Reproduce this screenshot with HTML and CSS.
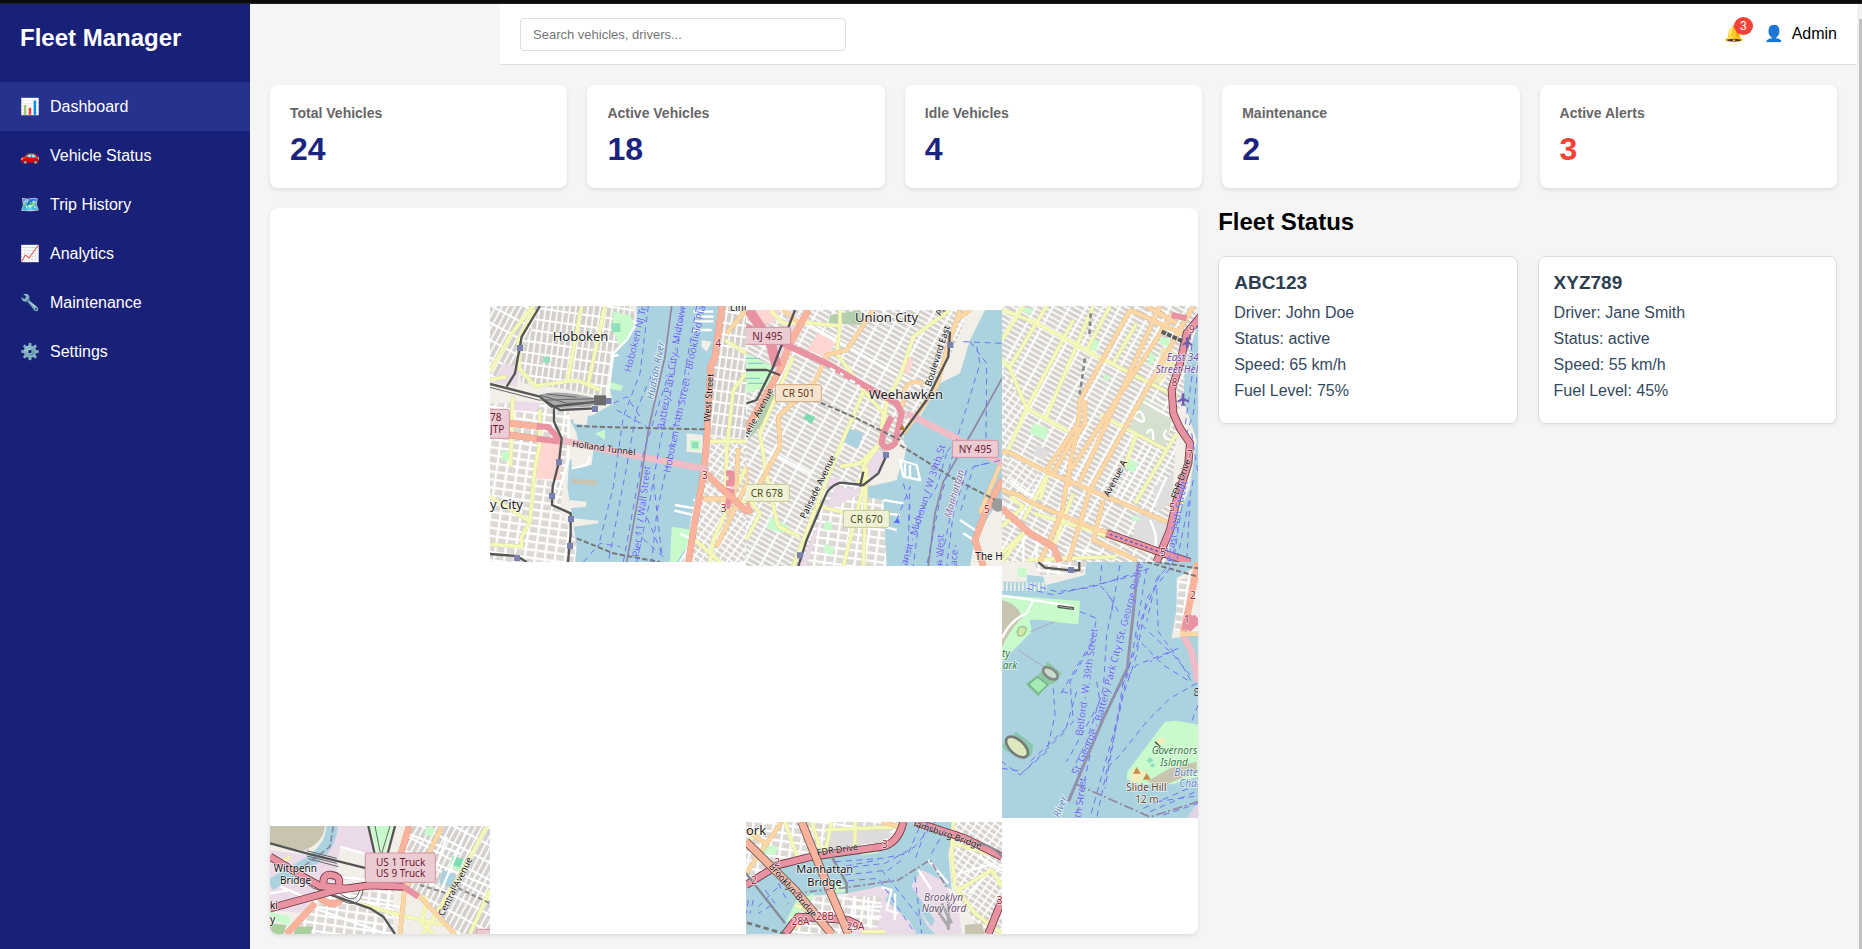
FILE: index.html
```html
<!DOCTYPE html>
<html lang="en">
<head>
<meta charset="utf-8">
<title>Fleet Manager</title>
<link rel="stylesheet" href="styles.css">
</head>
<body>
<div class="frame-edge"></div>
<div class="app">
  <aside class="sidebar">
    <h2 class="brand">Fleet Manager</h2>
    <nav class="nav">
      <a class="nav-item active" href="#"><span class="icon">📊</span>Dashboard</a>
      <a class="nav-item" href="#"><span class="icon">🚗</span>Vehicle Status</a>
      <a class="nav-item" href="#"><span class="icon">🗺️</span>Trip History</a>
      <a class="nav-item" href="#"><span class="icon">📈</span>Analytics</a>
      <a class="nav-item" href="#"><span class="icon">🔧</span>Maintenance</a>
      <a class="nav-item" href="#"><span class="icon">⚙️</span>Settings</a>
    </nav>
  </aside>

  <main class="main">
    <header class="header">
      <input class="search" type="text" placeholder="Search vehicles, drivers..." aria-label="Search vehicles, drivers">
      <div class="user-area">
        <button class="bell" type="button" aria-label="Notifications">🔔<span class="badge">3</span></button>
        <div class="user"><span class="icon">👤</span><span>Admin</span></div>
      </div>
    </header>

    <div class="content">
      <section class="stats">
        <article class="stat"><h3>Total Vehicles</h3><div class="value">24</div></article>
        <article class="stat"><h3>Active Vehicles</h3><div class="value">18</div></article>
        <article class="stat"><h3>Idle Vehicles</h3><div class="value">4</div></article>
        <article class="stat"><h3>Maintenance</h3><div class="value">2</div></article>
        <article class="stat"><h3>Active Alerts</h3><div class="value alert">3</div></article>
      </section>

      <div class="lower">
        <section class="map">
          <!-- Hoboken -->
          <svg class="tile tile-hoboken" viewBox="30 18 768 768">
            <defs>
              <pattern id="gridN" width="18" height="34" patternUnits="userSpaceOnUse" patternTransform="rotate(8)"><rect width="18" height="34" fill="#fff"/><rect x="3" y="3" width="13" height="28" fill="#d3cfca"/></pattern>
              <pattern id="gridNE" width="17" height="46" patternUnits="userSpaceOnUse" patternTransform="rotate(28)"><rect width="17" height="46" fill="#fff"/><rect x="2" y="3" width="12" height="40" fill="#d3d0cd"/></pattern>
              <pattern id="gridW" width="44" height="15" patternUnits="userSpaceOnUse" patternTransform="rotate(29)"><rect width="44" height="15" fill="#fff"/><rect x="2" y="3" width="38" height="10" fill="#d5d2ce"/></pattern>
              <pattern id="gridB" width="30" height="24" patternUnits="userSpaceOnUse" patternTransform="rotate(8)"><rect width="30" height="24" fill="#fff"/><rect x="4" y="4" width="23" height="17" fill="#dcd8d4"/></pattern>
              <pattern id="gridS" width="22" height="16" patternUnits="userSpaceOnUse" patternTransform="rotate(35)"><rect width="22" height="16" fill="#fff"/><rect x="3" y="3" width="17" height="11" fill="#d6d2cc"/></pattern>
            </defs>
            <rect class="land" x="30" y="18" width="768" height="768"/>
            <path fill="url(#gridNE)" d="M30 18H185L85 245L30 230Z"/>
            <path fill="url(#gridN)" d="M180 18H455L470 70L400 160L378 290L240 265L125 250L115 190Z"/>
            <path fill="url(#gridB)" d="M30 310H270L262 420L240 640L290 720L285 786H30Z"/>
            <path class="pink" d="M185 420L245 430L240 540L165 535Z"/>
            <path class="lilac" d="M70 190L120 205L110 260L40 248ZM90 300L180 310L170 335L95 330Z"/>
            <path class="water" d="M470 18H720L690 200L678 500L640 620L610 786H285L290 740L275 640L262 560L268 480L300 470L290 400L270 360L340 345L400 310L385 250L400 160L470 70Z"/>
            <path class="land" d="M280 335L325 340L320 375L280 370ZM275 440L340 450L335 495L275 500ZM270 600L320 605L318 620L270 625ZM280 655L355 662L355 670L280 680ZM620 400L668 405L668 460L620 455ZM665 120L695 125L680 155L665 140Z"/>
            <path fill="#c9c4b0" d="M275 535L352 542L350 556L275 550Z"/>
            <path class="park" d="M400 35L450 45L466 80L420 140L398 90ZM383 243L430 258L422 272L384 266ZM630 420L660 420L660 450L630 450ZM575 680L640 690L620 740L590 786H570ZM65 455L92 455L92 482L65 482ZM345 400L375 390V420Z"/>
            <path fill="#8fe0bb" d="M395 70h26v26h-26zM635 425h20v20h-20zM190 170h20v18h-20z"/>
            <path class="street" d="M415 165L390 170M640 35H700M645 50H700M642 64H700M640 90H695M585 615L645 625M583 632L640 645M640 600H700M600 700L640 720L600 786M265 345V480L225 615M470 70L440 120L400 160L383 290M275 505L320 495L330 470"/>
            <path fill="url(#gridN)" d="M722 18H798V420L690 405L690 200Z"/>
            <path fill="url(#gridS)" d="M685 410L798 420V786H632L650 650Z"/>
            <path class="yellow" d="M160 18L95 100L30 215M165 30L115 120L118 205L165 258L290 240L360 270M305 18L262 245M375 18L325 250M30 240L80 230M98 290L92 500M180 330L178 440L165 500L150 665L125 710V740L30 733M30 590L150 665M735 120L798 160M798 220L760 270L740 450L735 640M690 424H798M670 595L798 605M798 500L700 720L690 786M645 720L720 786"/>
            <path class="orange" d="M740 100L798 30M775 445L768 560L740 640M670 597H760M800 550L710 740"/>
            <path class="motorway" d="M725 570L755 575L740 625M738 520H755V550H738"/>
            <path class="trunk" d="M90 370L180 380M90 405L170 416M726 18L705 170L692 200L680 420L672 515L640 690L626 786M672 515L720 560L800 635"/>
            <path class="motorway" d="M170 378L205 382L245 425L170 416"/>
            <path class="tunnel" d="M240 420L440 462L680 508"/>
            <path class="rail-wide" d="M180 285Q230 265 370 300L330 320L220 325Z"/>
            <path class="rail" d="M180 18L125 110L105 220L80 260M30 252L180 290L215 320L380 302M190 300L240 330L345 325M222 325V365L245 415L237 485L218 560L216 615L272 640V700L264 786M30 762L110 768L140 786"/>
            <path class="rail-thin" d="M30 262L175 300L210 300L345 296M180 285L260 310L345 308M200 282L290 292"/>
            <path class="railtun" d="M290 378L480 384L680 388M290 715L400 760L540 786"/>
            <path class="boundary" d="M575 18L555 170L505 390L475 590L440 786"/>
            <path class="ferry" d="M505 18L480 220L430 350L400 560L355 740M525 200L470 330L440 500L385 786M560 240L490 460L430 786M610 18L580 240L540 430L510 600L470 786M650 18L600 300L560 500L530 640L515 786M400 310L440 290L480 350M410 330L500 380M545 760L500 650M550 770L470 700M545 760L520 540M310 786L360 730L420 740"/>
            <path class="station" d="M111 135h18v18h-18zM377 294h18v18h-18zM336 318h18v18h-18zM228 478h18v18h-18zM207 579h18v18h-18zM264 648h18v18h-18zM261 729h18v18h-18zM102 765h18v18h-18z"/>
            <rect x="342" y="286" width="36" height="30" fill="#6b6b6b"/>
            <text class="place" x="218" y="123">Hoboken</text>
            <text class="place" x="30" y="628">y City</text>
            <text class="place-s" x="750" y="34">Linc</text>
            <text class="ferry-t" transform="translate(452 218) rotate(-76)">Hoboken NJ Tra</text>
            <text class="water-t" transform="translate(520 300) rotate(-79)">Hudson River</text>
            <text class="ferry-t" transform="translate(552 390) rotate(-80)">Battery Park City - Midtown</text>
            <text class="ferry-t" transform="translate(570 520) rotate(-78)">Hoboken 14th Street - Brookfield Pla</text>
            <text class="ferry-t" transform="translate(478 772) rotate(-83)">Pier 11 / Wall Street</text>
            <text class="road-t" transform="translate(690 366) rotate(-86)">West Street</text>
            <text class="road-t" transform="translate(275 440) rotate(8)">Holland Tunnel</text>
            <text class="exit" x="706" y="140">4</text><text class="exit" x="666" y="538">3</text><text class="exit" x="722" y="636">3</text>
            <rect class="shield-m" x="10" y="328" width="78" height="87" rx="6"/>
            <text class="shield-mt" x="30" y="363">78</text><text class="shield-mt" x="30" y="398">JTP</text>
          </svg>

          <!-- Weehawken -->
          <svg class="tile tile-weehawken" viewBox="18 30 768 768">
            <rect class="land" x="18" y="30" width="768" height="768"/>
            <path fill="url(#gridW)" d="M18 30H690L620 190L500 420L350 540L220 798H18Z"/>
            <path fill="url(#gridB)" d="M250 540L430 560L440 798H200Z"/>
            <path class="lilac" d="M150 30L200 60L120 230L90 200ZM240 540L300 530L180 798H200L250 640L380 570L270 560ZM400 450L440 460L400 540L360 510Z"/>
            <path fill="#b5cfae" d="M270 45L360 30L365 75L265 70ZM90 270L110 290L60 380L25 420Z"/>
            <path class="park" d="M18 160L100 200L85 260L18 280ZM535 380L560 385L555 415L525 412ZM90 650L150 680L130 700L80 685ZM255 665H275V690H250ZM255 730L285 745L275 765L250 755Z"/>
            <path d="M18 175H60M25 190H70M18 235H60M25 250H70" stroke="#7dbdd6" stroke-width="3"/>
            <path fill="#7edcb0" d="M200 340L225 350L215 372L190 355Z"/>
            <path class="pink" d="M235 100L285 130L260 170L200 150ZM50 30H120L100 70H60ZM500 165L520 180L505 225L490 210ZM450 480L470 500L455 530L425 520Z"/>
            <path class="water" d="M735 30H786V590L745 650L700 740L690 798H440L430 600L375 590L385 560L470 540L495 450L490 400L540 350L600 250L660 220L690 120ZM325 385L370 400L355 445L308 425Z"/>
            <path class="land" d="M470 420L500 435L490 490L455 545L420 550L440 470ZM600 190L630 215L620 240L595 235Z"/>
            <path class="street" d="M480 480L530 495L540 540L490 530ZM495 490V530M510 495V535M430 600L490 610M430 640L480 645M430 680L470 690M660 660L720 700M670 700L710 725M130 30L480 230L540 260M60 440L210 520"/>
            <path class="yellow" d="M90 30L130 70L200 68L300 78V30M300 78L290 160L370 270L430 340L420 430L370 500V560L310 798M630 30L520 110L480 230L440 300L430 400M370 275L300 440L240 590L160 798M160 170L60 400L75 500L95 600L115 680L180 710M235 618L320 640M350 540L380 560M380 500L370 798M20 590L60 640L18 720M300 500L360 490L420 430"/>
            <path class="orange" d="M400 30L320 150L260 165L225 245M225 245L115 350L120 440L55 560L18 600M660 30L620 150L590 260L490 400M130 30L180 70M550 250Q490 230 490 300L480 340M18 500L18 600M786 480L720 640M650 60L690 30"/>
            <path class="trunk" d="M205 30L150 130L120 210L18 390M786 540L735 640L705 720L730 798M18 610L30 640"/>
            <path class="tunnel" d="M500 340L640 410L786 490"/>
            <path class="motorway-w" d="M25 30L90 120L110 200"/>
            <path class="motorway-w2" d="M18 80L140 135L260 190L370 255L470 310L485 340L465 430Q440 455 425 430L430 400L455 350"/>
            <path class="street" d="M270 205L285 213M300 220L310 226M330 240L345 248M350 255L360 260"/>
            <path class="railtun" d="M200 290L350 355L480 420M480 435L640 535L786 610"/>
            <path class="rail" d="M18 210H80L120 225M630 95L625 170L560 300L480 410M165 30L100 200L50 300L20 310M440 465L415 520L370 555L300 548Q265 560 255 590L200 720L175 798M370 515L360 560"/>
            <path class="boundary" d="M786 235L700 390L610 545L585 640L565 798"/>
            <path class="ferry" d="M690 125L740 190L738 430M670 125L786 130M710 140L720 190L650 420L600 480M620 460L590 560L540 640L520 798M640 460L600 600L560 798M680 510L640 640L620 798M650 560L600 798M700 500L786 480M470 660L510 560L505 680M740 490L700 500L660 640M490 550L510 620L500 798"/>
            <circle cx="775" cy="615" r="20" fill="#9b9b9b"/>
            <path class="station" d="M622 126h18v18h-18zM429 456h18v18h-18zM171 757h18v18h-18z"/>
            <path fill="#5b6bff" d="M460 668l14-14 6 16z"/><path fill="#b07b3d" d="M478 390l8-18 10 18z"/>
            <text class="place" x="345" y="66">Union City</text>
            <text class="place" x="386" y="296">Weehawken</text>
            <text class="place-s" x="706" y="780">The H</text>
            <text class="road-t" transform="translate(600 50) rotate(-48)">Pa</text>
            <text class="road-t" transform="translate(572 260) rotate(-72)">Boulevard East</text>
            <text class="road-t" transform="translate(196 658) rotate(-64)">Palisade Avenue</text>
            <text class="road-t" transform="translate(24 415) rotate(-62)">nelle Avenue</text>
            <text class="water-t boundary-t" transform="translate(632 655) rotate(-74)">Manhattan</text>
            <text class="ferry-t" transform="translate(500 798) rotate(-72)">ansit - Midtown / W 39th St</text>
            <text class="ferry-t" transform="translate(608 798) rotate(-88)">n West</text>
            <text class="ferry-t" transform="translate(650 798) rotate(-86)">ace -</text>
            <text class="exit" x="732" y="640">5</text>
            <rect class="shield-m" x="-8" y="82" width="160" height="51" rx="6"/><text class="shield-mt" x="37" y="119">NJ 495</text>
            <rect class="shield-m" x="637" y="421" width="138" height="51" rx="6"/><text class="shield-mt" x="656" y="458">NY 495</text>
            <rect class="shield-o" x="106" y="254" width="138" height="51" rx="6"/><text class="shield-ot" x="127" y="290">CR 501</text>
            <rect class="shield-y" x="-2" y="553" width="150" height="51" rx="6"/><text class="shield-yt" x="32" y="590">CR 678</text>
            <rect class="shield-y" x="310" y="631" width="138" height="51" rx="6"/><text class="shield-yt" x="331" y="668">CR 670</text>
          </svg>

          <!-- Lower Manhattan -->
          <svg class="tile tile-manhattan" viewBox="36 18 768 768">
            <rect class="land" x="36" y="18" width="768" height="768"/>
            <path fill="url(#gridW)" d="M36 18H620L560 400L530 786H36Z"/>
            <path fill="url(#gridS)" d="M36 200L110 330L50 460L36 470ZM60 470L150 510L110 600L36 560Z"/>
            <path fill="#dfdddd" d="M440 640L540 660L520 740L430 720ZM140 435L180 455L160 480L130 465ZM490 560L550 520V600L500 640Z"/>
            <path class="water" d="M624 70L585 200L580 300L620 420L600 560L545 700L530 786H804V18H640Z"/>
            <path class="park" d="M130 370L175 385L165 420L118 400ZM305 115L328 125L318 155L300 145ZM415 475L445 490L430 520L405 505ZM510 110L540 115L535 140L508 130ZM560 570L580 590L570 630L550 660ZM430 645L450 655L445 665L425 660ZM345 222L362 232L355 242L340 234ZM100 22L130 28L125 42L98 36ZM480 150L495 170L485 195L475 190Z"/>
            <path fill="#d5e0ce" d="M455 290L550 350L525 440L420 385Z"/>
            <path fill="#efe8b9" d="M515 140L560 160L550 200L510 250L490 245Z"/>
            <path class="street" d="M460 305L540 350M485 435L390 600M530 530L480 640M430 350q20-30 30 0t-30 0M470 400q20-30 20 20M500 290q20 30 40 10M530 390q-20 20 10 30M480 660q30 60 10 90M60 540L140 600M36 610L100 640M220 740L330 760M100 690V786M140 690V786"/>
            <path class="yellow" d="M36 30L130 65L230 118L300 158L560 290M100 18L36 120M170 18L60 200M250 60L110 325M310 18L165 360M360 18L290 150M440 70L370 190M36 180L60 205L110 325L235 395M110 325L50 460M330 345L530 450M440 400L405 500M560 400L435 610M170 530L100 660M60 590L100 620L36 680M130 640L300 690L440 740L500 760M250 580L190 740L200 786M180 500L150 600M36 786L100 700L36 760M110 780L380 770"/>
            <path class="orange" d="M420 30L270 300L265 370L165 515M285 300V370L240 430L190 520M510 18L270 545M550 40L235 520L215 640L150 786M610 18L300 570L235 786M420 30L530 80L600 110M470 18L560 70M36 455L60 458L170 515L350 590L530 665M265 380L240 490L235 560M60 575L130 610L310 685L370 700M340 600L310 720L440 780M36 570L100 590"/>
            <path class="trunk" d="M36 625L120 700L190 740L210 786"/>
            <path class="casing-m" d="M640 40L590 100L570 190L545 270L550 340L570 385L600 430L595 490L560 600L540 690L500 786"/>
            <path class="motorway-w2" d="M640 40L590 100L570 190L545 270L550 340L570 385L600 430L595 490L560 600L540 690L500 786"/>
            <path class="motorway" d="M545 45L590 55"/>
            <path class="casing-m" d="M350 700L520 760L600 786"/><path class="motorway-w2" d="M350 700L520 760L600 786"/>
            <path d="M360 703L520 760" stroke="#445ab5" stroke-width="4" stroke-dasharray="8 8"/>
            <path d="M302 40L298 110M285 175L268 290" stroke="#888" stroke-width="8" stroke-dasharray="14 10"/>
            <path d="M515 95L580 125" stroke="#5b5b5b" stroke-width="12" stroke-dasharray="14 4"/>
            <path class="ferry" d="M624 80L600 100L610 200L585 380M605 400L624 520M610 540L560 786M600 600L590 786M575 620L550 786M624 200L610 340L590 400"/>
            <path fill="#6f5cae" d="M575 280h8v14l14 8v5l-14-4v8l5 6h-16l4-6v-8l-13 4v-5l12-8zM588 112h8v12l11 8v5l-11-4v12h-8v-12l-10 4v-5l10-8z"/>
            <text class="helio" x="530" y="183">East 34</text><text class="helio" x="497" y="218">Street Hel</text>
            <text class="road-t" transform="translate(356 592) rotate(-62)">Avenue A</text>
            <text class="road-t" transform="translate(560 598) rotate(-70)">FDR Drive</text>
            <text class="ferry-t" transform="translate(545 786) rotate(-79)">e East 34th Street</text>
            <text class="exit" x="597" y="99">9</text><text class="exit" x="545" y="258">8</text><text class="exit" x="591" y="473">7</text><text class="exit" x="538" y="632">5</text><text class="exit" x="511" y="768">5</text>
          </svg>

          <!-- Upper Bay -->
          <svg class="tile tile-bay" viewBox="36 21 768 768">
            <rect class="water" x="36" y="21" width="768" height="768"/>
            <path class="land" d="M36 21H290L285 60L170 90H36Z"/>
            <path fill="url(#gridB)" d="M130 21H290L280 55L150 60Z"/>
            <path class="water" d="M36 80H110L112 60L160 65L165 90L290 70L180 125L36 110Z"/>
            <path d="M36 95H170" stroke="#f2efe9" stroke-width="26" stroke-dasharray="5 7"/>
            <path class="park" d="M36 120L270 138L265 208L120 195L125 230L36 320ZM82 40H110V66H84Z"/>
            <path fill="#c9c4b0" d="M36 135Q90 150 95 190Q70 210 36 275Z"/>
            <path fill="#aad3df" d="M118 195Q160 190 230 208L150 235Q125 230 118 195Z"/>
            <path class="street" d="M36 122L130 135L250 155M130 135L110 175Q60 195 36 250"/>
            <path d="M205 152L250 158V163L205 157Z" fill="none" stroke="#555" stroke-width="4"/>
            <path fill="#d6e8a9" stroke="#9ac38d" stroke-width="4" d="M82 230Q90 205 110 220Q105 245 85 243Z"/>
            <path d="M85 285L160 335M120 230L195 200" stroke="#a994a9" stroke-width="2"/>
            <path fill="#8cc9a0" d="M172 320L215 355L192 386L170 388L145 425L106 387L150 355Z"/>
            <path fill="#a5eab3" stroke="#70ad83" stroke-width="4" d="M142 366L174 390L144 416L116 388Z"/>
            <ellipse cx="181" cy="355" rx="25" ry="14" transform="rotate(35 181 355)" fill="#c9dccb" stroke="#858687" stroke-width="8"/>
            <path fill="#89c6ae" d="M36 572L78 530L130 570L125 600L100 612L45 585Z"/>
            <ellipse cx="81" cy="576" rx="40" ry="21" transform="rotate(42 81 576)" fill="#dce9bd" stroke="#77797a" stroke-width="8"/>
            <path class="land" d="M560 70L624 30V240L545 250L560 160Z"/>
            <path fill="url(#gridB)" d="M565 75L610 65L600 230H555Z"/>
            <path class="trunk-w" d="M624 21L598 150L580 230"/>
            <path class="motorway-w" d="M590 220L624 190M600 180L590 225"/>
            <path class="tunnel" d="M580 240L605 290L624 380"/>
            <path class="orange" d="M570 237H624"/>
            <path class="rail" d="M145 21L165 38L240 46L268 46V21"/><path class="station" d="M234 36h18v18h-18z"/>
            <path class="railtun" d="M470 21L624 65M500 21L624 40"/>
            <path fill="#c8facc" d="M525 500L560 497L640 512V660L550 688H440L410 672L412 650Z"/>
            <path fill="#c9c4b0" d="M540 640L620 620V650L520 692L470 680Z"/>
            <path fill="#f4edbb" d="M500 555L520 545L528 562L508 570ZM430 640L470 650L450 680H420Z"/>
            <path fill="#8ce0b8" d="M470 615l12-8 8 10-12 8zM480 630l10-6 6 8-10 6z"/>
            <path d="M495 560L510 575L500 590" stroke="#444" stroke-width="4" fill="none"/>
            <path fill="#e0d4e4" d="M624 740L590 789H804V740Z"/>
            <path class="boundary-w" d="M445 21L430 170L412 340L340 490L235 740"/>
            <path class="boundary" d="M260 688L480 786L624 740" stroke-dasharray="30 8 6 8"/>
            <path class="ferry" d="M120 88L200 110L300 98L480 40M110 100L190 120L440 60M270 170L320 190L305 260L210 420M335 30L330 90L370 140L350 240L340 400L290 560L245 650M390 30L365 170M385 170L350 110M190 400L195 480L170 590L90 660L36 620M260 410L225 530L95 655M215 410L240 415M310 260L240 380L250 500L120 620M320 380L330 440L230 620M540 40L470 130L440 300L400 420L360 600L320 789M510 60L450 200L440 250L520 330L600 380M500 100L505 230L570 320L610 390M455 210L550 300L600 360M565 280L440 330L380 410M545 290L480 320M620 385L540 430L470 500L390 600L350 640M470 40L430 280L380 500L300 789M624 450L605 500M445 260L400 380L370 560L345 700M550 21L500 70L470 200M300 600L260 789M460 760L640 680M480 770L640 700M500 740L640 720M520 780L640 740M36 640L100 650"/>
            <text class="park-t" x="36" y="307">ty</text><text class="park-t" x="38" y="342">ark</text>
            <text class="park-t" x="485" y="596">Governors</text><text class="park-t" x="511" y="632">Island</text>
            <text class="water-t" x="553" y="662">Butte</text><text class="water-t" x="568" y="696">Cha</text>
            <path fill="#c88a4a" d="M429 656l11-20 12 20zM459 674l11-20 12 20z"/>
            <text class="hill" x="409" y="708">Slide Hill</text><text class="hill" x="436" y="743">12 m</text>
            <text class="ferry-t" transform="translate(277 544) rotate(-82)">Belford - W. 39th Street</text>
            <text class="ferry-t" transform="translate(264 662) rotate(-67)">St. George -</text>
            <text class="ferry-t" transform="translate(334 500) rotate(-75)">Battery Park City (St. George Route)</text>
            <text class="ferry-t" transform="translate(272 789) rotate(-82)">th Street</text>
            <text class="water-t" transform="translate(208 789) rotate(-68)">River</text>
            <text class="road-t" transform="translate(626 425) rotate(-84)">ro</text>
            <text class="exit" x="600" y="132">2</text><text class="exit" x="582" y="203">1</text>
          </svg>

          <!-- Jersey City -->
          <svg class="tile tile-jersey" viewBox="-78 48 768 768">
            <rect class="land" x="-78" y="48" width="768" height="768"/>
            <path class="lilac" d="M230 48H330L345 200L180 220L130 310L30 300V120L170 140Z"/>
            <path fill="#c9c4b0" d="M30 48H195Q190 100 130 122L30 100Z"/>
            <path d="M216 48Q215 110 150 155Q90 190 30 225" class="river"/>
            <path fill="url(#gridB)" d="M190 255L400 240L400 372H90L170 290Z"/>
            <path fill="url(#gridNE)" d="M440 48H690V372H590L470 250L430 220Z"/>
            <path class="park" d="M330 48H400L370 140L350 120ZM500 50L525 55L515 80L492 72ZM575 140L612 152L600 185L568 172ZM30 305L90 320V345L30 330Z"/>
            <path fill="#7edcb0" d="M580 138L610 148L600 172L572 164Z"/>
            <path fill="#a9cf9f" d="M30 340L80 345L70 372H30ZM110 350H160L150 372H100Z"/>
            <path class="water" d="M548 180L590 196L575 235L538 218Z"/>
            <path class="pink" d="M170 270L240 265L230 290L190 285Z"/>
            <path class="land" d="M240 110L315 130L310 210L230 190Z"/>
            <path class="street" d="M240 110L310 130M230 200L330 210M180 258L420 290M150 290L380 372M60 230L170 275M30 250L90 240M440 70L600 130M430 120L690 230M330 280L430 330M560 80L500 260M620 60L540 250M360 220L340 372M390 220L370 372"/>
            <path class="yellow" d="M690 30L610 180L490 372M300 282L440 320L550 345M60 160L90 140M500 260L485 340L520 372M690 240L630 372"/>
            <path class="orange" d="M545 48L480 190L435 230M435 225L420 372M470 250L585 372"/>
            <path class="trunk" d="M448 48L420 140M165 280L80 372M180 262Q220 300 245 265"/>
            <path class="rail" d="M30 100L140 130L320 175M325 48L355 180M405 48L370 180M200 250L330 295L370 320L405 372"/>
            <path class="rail-thin" d="M140 122L230 145M140 138L230 160M145 146L235 170M345 48L365 150M390 48L350 180M60 165L160 235L240 262M240 250Q290 290 300 235M230 262Q300 310 310 235"/>
            <path class="casing-m" d="M30 295L230 240L330 226L430 230M30 140L130 200L180 228L260 236M190 220Q190 190 215 195Q245 200 235 225"/>
            <path class="motorway-w2" d="M30 295L230 240L330 226L430 230L475 260M30 140L130 200L180 228L260 236M190 220Q190 190 215 195Q245 200 235 225"/>
            <path d="M575 225L690 280M480 225L560 250" stroke="#888" stroke-width="6" stroke-dasharray="14 8"/>
            <path class="boundary" d="M220 48L210 110L130 170" stroke-dasharray="20 8"/>
            <text class="place-s" x="41" y="186">Wittpenn</text><text class="place-s" x="60" y="221">Bridge</text>
            <text class="place-s" x="30" y="298">ki</text><text class="place-s" x="30" y="339">y</text>
            <text class="road-t" transform="translate(550 320) rotate(-63)">Central Avenue</text>
            <rect class="shield-m" x="316" y="129" width="210" height="88" rx="6"/>
            <text class="shield-mt" x="348" y="167">US 1 Truck</text><text class="shield-mt" x="348" y="202">US 9 Truck</text>
            <rect class="shield-m" x="649" y="358" width="80" height="50" rx="6"/>
          </svg>

          <!-- East River bridges -->
          <svg class="tile tile-brooklyn" viewBox="33 36 768 768">
            <rect class="land" x="33" y="36" width="768" height="768"/>
            <path fill="url(#gridB)" d="M33 36H500L440 110L130 160L33 210Z"/>
            <path fill="#dedcda" d="M270 60L480 40L450 90L270 125Z"/>
            <path class="water" d="M510 36H660L640 130L650 240L590 200L560 240L640 372H540L440 230L340 250L190 260L160 372H33V230L130 165L440 118Z"/>
            <path class="lilac" d="M340 250L440 228L500 290L545 372H340ZM560 180L620 210L670 290L680 372H590L520 240Z"/>
            <path fill="url(#gridB)" d="M190 262L440 258L430 350L300 372H150Z"/>
            <path fill="url(#gridS)" d="M650 36H801V372H740L650 220Z"/>
            <path class="water" d="M470 240L600 372H570L450 270ZM520 215L600 330L590 350L500 230Z"/>
            <path class="park" d="M185 270L240 250L220 290L150 340ZM80 105L130 110L120 135L70 130ZM280 235L320 215L335 245L290 250ZM370 125L430 115V130L380 135Z"/>
            <path fill="#c9c4b0" d="M690 345L740 340L750 372H690Z"/>
            <path class="street" d="M550 180L590 240M580 150L640 220M440 232L470 240L455 300L490 310M360 262V350M400 260V350M340 290H440M340 320H440M700 120L801 180M670 190L780 160M700 250L760 190M610 300L640 350M480 250V330"/>
            <path d="M600 290L640 350M620 280L650 340M640 270L640 360" stroke="#aaa" stroke-width="9"/>
            <path class="yellow" d="M33 100L80 60M230 36L260 130M270 60L500 50M290 36L270 130M360 36V130M150 36L190 150M655 36L650 130L660 230L720 310L801 372M650 100L801 140M670 240L770 180L801 230M180 285L240 310L150 372M380 365H450"/>
            <path class="orange" d="M140 36L33 190M33 60L90 100M440 36L490 50"/>
            <path class="casing-m" d="M33 225L130 165L230 140L440 110Q490 100 505 36M540 36L690 85L801 140M801 270L760 372M150 372L190 320L340 330L370 345"/>
            <path class="motorway-w2" d="M33 225L130 165L230 140L440 110Q490 100 505 36M540 36L690 85L801 140M801 270L760 372M150 372L190 320L340 330L370 345"/>
            <path class="casing-t" d="M33 95L180 240L290 372M200 36L250 160L340 372"/>
            <path class="trunk-w" d="M33 95L180 240L290 372M200 36L250 160L340 372"/>
            <path d="M33 190L150 340M290 140L335 220V250M720 100Q770 100 801 140" stroke="#888b93" stroke-width="7" fill="none"/>
            <path d="M36 338L150 372" stroke="#777" stroke-width="8" stroke-dasharray="16 10"/>
            <path class="boundary" d="M180 250L340 232L490 210L585 150L635 232" stroke-dasharray="22 8 6 8"/>
            <path class="ferry" d="M40 270L35 310M55 270L45 310M90 240L120 280L70 310M130 220L160 280M300 155L440 145L520 130L560 36M320 175L450 160L540 110L600 36M330 195L460 180L500 150M340 212L430 205L540 370M440 180L560 330M150 210L60 300M270 180L430 150M580 36L540 150M630 60L590 130L580 140M540 200L560 370"/>
            <text class="place" x="33" y="76">ork</text>
            <text class="place-m" x="184" y="188">Manhattan</text><text class="place-m" x="217" y="227">Bridge</text>
            <text class="helio yard" x="567" y="272">Brooklyn</text><text class="helio yard" x="560" y="307">Navy Yard</text>
            <text class="road-t" transform="translate(247 137) rotate(-8)">FDR Drive</text>
            <text class="road-t" transform="translate(100 170) rotate(49)">Brooklyn Bridge</text>
            <text class="road-t" transform="translate(535 48) rotate(19)">iamsburg Bridge</text>
            <text class="exit" x="441" y="114">3</text><text class="exit" x="118" y="168">2</text><text class="exit" x="48" y="223">2</text>
            <text class="exit" x="170" y="345">28A</text><text class="exit" x="243" y="331">28B</text><text class="exit" x="335" y="361">29A</text><text class="exit" x="785" y="283">3</text>
          </svg>
        </section>

        <section class="fleet">
          <h2>Fleet Status</h2>
          <div class="vehicles">
            <article class="vehicle">
              <h3>ABC123</h3>
              <p>Driver: John Doe</p>
              <p>Status: active</p>
              <p>Speed: 65 km/h</p>
              <p>Fuel Level: 75%</p>
            </article>
            <article class="vehicle">
              <h3>XYZ789</h3>
              <p>Driver: Jane Smith</p>
              <p>Status: active</p>
              <p>Speed: 55 km/h</p>
              <p>Fuel Level: 45%</p>
            </article>
          </div>
        </section>
      </div>
    </div>
  </main>
  <div class="scrollbar"><div class="thumb"></div></div>
</div>
</body>
</html>
```

FILE: styles.css
```css
* {
  box-sizing: border-box;
  margin: 0;
  padding: 0;
}

body {
  display: flex;
  flex-direction: column;
  min-height: 100vh;
  background: #f5f5f5;
  color: #000;
  font: 16px "Liberation Sans", Arial, "Noto Color Emoji", sans-serif;
}

.frame-edge {
  height: 4px;
  background: #0b0b0b;
  border-bottom: 1px solid #222;
}

.app {
  display: flex;
  flex: 1;
}

/* Sidebar */
.sidebar {
  flex: 0 0 250px;
  background: #182077;
  color: #fff;
}

.brand {
  padding: 20px 20px 30px;
  font-size: 24px;
  line-height: 28px;
}

.nav {
  display: flex;
  flex-direction: column;
}

.nav-item {
  display: flex;
  gap: 10px;
  padding: 15px 20px;
  color: #fff;
  line-height: 19px;
  text-decoration: none;
}

.nav-item.active {
  background: #26328c;
}

.icon {
  width: 20px;
}

/* Header */
.main {
  display: flex;
  flex: 1;
  flex-direction: column;
  min-width: 0;
}

.header {
  display: flex;
  align-items: flex-start;
  justify-content: space-between;
  margin-left: 250px;
  padding: 14px 20px 13px;
  background: #fff;
  border-bottom: 1px solid #ddd;
}

.search {
  width: 326px;
  height: 33px;
  padding: 8px 12px;
  border: 1px solid #ddd;
  border-radius: 4px;
  font: 13px "Liberation Sans", Arial, sans-serif;
}

.search::placeholder {
  color: #757575;
}

.user-area,
.user {
  display: flex;
  align-items: center;
}

.user-area {
  gap: 20px;
  padding-top: 6px;
  line-height: 19px;
}

.user {
  gap: 7px;
}

.bell {
  position: relative;
  width: 20px;
  border: 0;
  background: none;
  font: inherit;
}

.badge {
  position: absolute;
  top: -7px;
  right: -8px;
  padding: 2px 6px;
  border-radius: 50%;
  background: #f44336;
  color: #fff;
  font-size: 12px;
  line-height: 14px;
}

/* Content */
.content {
  display: flex;
  flex: 1;
  flex-direction: column;
  gap: 20px;
  padding: 20px 20px 15px;
}

.stats {
  display: grid;
  grid-template-columns: repeat(5, 1fr);
  gap: 20px;
}

.stat {
  padding: 20px;
  border-radius: 8px;
  background: #fff;
  box-shadow: 0 2px 4px rgba(0, 0, 0, 0.1);
}

.stat h3 {
  margin-bottom: 10px;
  color: #666;
  font-size: 14px;
  line-height: 16px;
}

.value {
  color: #1a237e;
  font-size: 32px;
  font-weight: bold;
  line-height: 37px;
}

.value.alert {
  color: #f44336;
}

.lower {
  display: grid;
  flex: 1;
  grid-template-columns: 3fr 2fr;
  gap: 20px;
}

.fleet h2 {
  margin-bottom: 20px;
  font-size: 24px;
  line-height: 28px;
}

.vehicles {
  display: grid;
  grid-template-columns: 1fr 1fr;
  gap: 20px;
}

.vehicle {
  padding: 15px;
  border: 1px solid #ddd;
  border-radius: 8px;
  background: #fff;
  box-shadow: 0 2px 4px rgba(0, 0, 0, 0.05);
}

.vehicle h3 {
  margin-bottom: 10px;
  color: #2c3e50;
  font-size: 19px;
  line-height: 22px;
}

.vehicle p {
  margin-bottom: 8px;
  color: #34495e;
  line-height: 18px;
}

/* Scrollbar at the window edge */
.scrollbar {
  flex: 0 0 5px;
  padding: 15px 0 0 2px;
  background: #f1f1f1;
}

.thumb {
  height: 100%;
  background: #c1c1c1;
}

/* Map canvas and its tiles */
.map {
  position: relative;
  overflow: hidden;
  border-radius: 8px;
  background: #fff;
  box-shadow: 0 2px 4px rgba(0, 0, 0, 0.1);
}

.tile {
  position: absolute;
  width: 256px;
  height: 256px;
  font-family: "Noto Sans", sans-serif;
}

.tile-hoboken { left: 220px; top: 98px; }
.tile-weehawken { left: 476px; top: 102px; }
.tile-manhattan { left: 732px; top: 98px; }
.tile-bay { left: 732px; top: 354px; }
.tile-jersey { left: -36px; top: 618px; }
.tile-brooklyn { left: 476px; top: 614px; }

.land { fill: #f2efe9; }
.water { fill: #aad3df; }
.park { fill: #c8facc; }
.pink { fill: #ffd6d1; }
.lilac { fill: #ebdbe8; }

.street, .yellow, .orange, .trunk, .trunk-w, .motorway, .motorway-w,
.motorway-w2, .tunnel, .rail, .rail-thin, .railtun, .boundary, .boundary-w,
.ferry, .casing-m, .casing-t, .river {
  fill: none;
  stroke-linejoin: round;
}

.street { stroke: #fff; stroke-width: 7; }
.yellow { stroke: #f5f8b6; stroke-width: 11; filter: drop-shadow(0 0 2px #b9bd78); }
.orange { stroke: #fcd6a4; stroke-width: 13; filter: drop-shadow(0 0 2px #c1904e); }
.trunk { stroke: #f9b29c; stroke-width: 19; filter: drop-shadow(0 0 2px #c9735a); }
.trunk-w { stroke: #f9b29c; stroke-width: 21; }
.motorway { stroke: #e892a2; stroke-width: 18; }
.motorway-w { stroke: #e892a2; stroke-width: 30; }
.motorway-w2 { stroke: #e892a2; stroke-width: 19; }
.tunnel { stroke: #f1bcc6; stroke-width: 20; }
.casing-m { stroke: #6e3844; stroke-width: 24; }
.casing-t { stroke: #6d5650; stroke-width: 26; }
.river { stroke: #aad3df; stroke-width: 34; }
.rail { stroke: #555; stroke-width: 7; }
.rail-thin { stroke: #666; stroke-width: 3; }
.rail-wide { fill: #aaa; }
.railtun { stroke: #777; stroke-width: 6; stroke-dasharray: 16 7; }
.boundary { stroke: #8d7090; stroke-width: 5; opacity: 0.8; }
.boundary-w { stroke: #8f7f9f; stroke-width: 9; opacity: 0.8; }
.ferry { stroke: #6f73f5; stroke-width: 3; stroke-dasharray: 18 14; }
.station { fill: #7981b0; }

.tile text {
  paint-order: stroke;
  stroke: rgba(255, 255, 255, 0.7);
  stroke-width: 5px;
  stroke-linejoin: round;
}

.place { fill: #222; font-size: 39px; }
.place-m { fill: #111; font-size: 33px; }
.place-s { fill: #111; font-size: 30px; }
.road-t { fill: #111; font-size: 27px; }
.tile .road-t { stroke-width: 2px; }
.tile .ferry-t { fill: #6668ee; font-size: 30px; stroke-width: 1px; }
.water-t { fill: #5a86b8; font-size: 30px; font-style: italic; }
.boundary-t { fill: #8d709a; }
.helio { fill: #6c50a8; font-size: 30px; font-style: italic; }
.yard { fill: #6b5070; }
.park-t { fill: #2c7c39; font-size: 30px; font-style: italic; }
.hill { fill: #6a4526; font-size: 30px; }
.exit { fill: #a02535; font-size: 30px; }

.shield-m { fill: #ecccd3; stroke: #d4929f; stroke-width: 3; }
.shield-o { fill: #f7e4cf; stroke: #d5aa7b; stroke-width: 3; }
.shield-y { fill: #f0f2d5; stroke: #c3c78c; stroke-width: 3; }
.shield-mt { fill: #6b1932; font-size: 30px; }
.shield-ot { fill: #5e3a16; font-size: 30px; }
.shield-yt { fill: #484c1b; font-size: 30px; }
.tile .shield-mt, .tile .shield-ot, .tile .shield-yt { stroke: none; }
```
